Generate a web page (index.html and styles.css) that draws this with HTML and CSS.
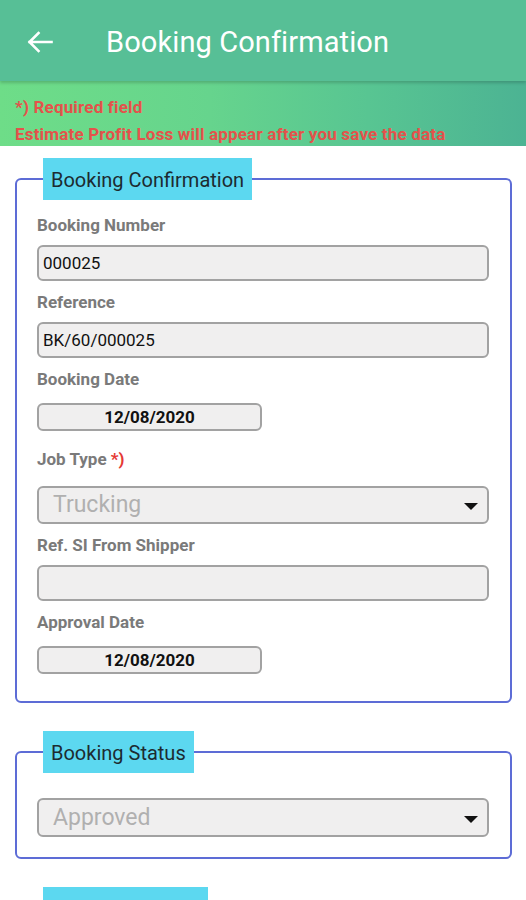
FILE: index.html
```html
<!DOCTYPE html>
<html lang="en">
<head>
<meta charset="utf-8">
<title>Booking Confirmation</title>
<link rel="stylesheet" href="styles.css">
</head>
<body>
<header class="appbar">
  <button class="back" aria-label="Back">
    <svg width="26" height="22" viewBox="0 0 26 22" aria-hidden="true">
      <path d="M24.5 11H2.5M11.5 2L2.5 11L11.5 20" fill="none" stroke="#ffffff" stroke-width="2.6" stroke-linecap="square" stroke-linejoin="miter"/>
    </svg>
  </button>
  <h1 class="title">Booking Confirmation</h1>
</header>
<div class="notice">
  <p>*) Required field</p>
  <p>Estimate Profit Loss will appear after you save the data</p>
</div>
<main class="content">
  <fieldset class="group">
    <legend class="group-title">Booking Confirmation</legend>
    <div class="field">
      <label class="label">Booking Number</label>
      <div class="input">000025</div>
    </div>
    <div class="field">
      <label class="label">Reference</label>
      <div class="input">BK/60/000025</div>
    </div>
    <div class="field field-date">
      <label class="label">Booking Date</label>
      <div class="date">12/08/2020</div>
    </div>
    <div class="field field-select">
      <label class="label">Job Type <span class="req">*)</span></label>
      <div class="select"><span class="placeholder">Trucking</span><span class="caret"></span></div>
    </div>
    <div class="field">
      <label class="label">Ref. SI From Shipper</label>
      <div class="input"></div>
    </div>
    <div class="field field-date">
      <label class="label">Approval Date</label>
      <div class="date">12/08/2020</div>
    </div>
  </fieldset>

  <fieldset class="group group-status">
    <legend class="group-title">Booking Status</legend>
    <div class="select"><span class="placeholder">Approved</span><span class="caret"></span></div>
  </fieldset>

  <fieldset class="group">
    <legend class="group-title group-title-next"></legend>
    <div class="field">
      <div class="input"></div>
    </div>
  </fieldset>
</main>
</body>
</html>
```
FILE: styles.css
```css
* { box-sizing: border-box; }
html, body { margin: 0; padding: 0; background: #ffffff; }
body {
  font-family: Roboto, "Noto Sans", "Liberation Sans", sans-serif;
  color: #1b1b1b;
  width: 526px;
}
.appbar {
  height: 81px;
  background: #57bf96;
  display: flex;
  align-items: center;
  padding: 3px 0 0 0;
  box-shadow: 0 2px 3px rgba(0, 0, 0, 0.18);
  position: relative;
  z-index: 1;
}
.back {
  background: none;
  border: 0;
  padding: 0;
  margin: 0 0 0 27px;
  width: 26px;
  height: 22px;
  display: flex;
}
.title {
  margin: 0 0 0 53px;
  font-size: 29px;
  font-weight: 400;
  color: #ffffff;
  line-height: 32px;
  letter-spacing: 0.1px;
}
.notice {
  height: 65px;
  padding: 13px 0 0 15px;
  background: linear-gradient(90deg, #6edd88 0%, #66d48d 40%, #58c592 70%, #4cb393 100%);
  color: #e4524b;
  font-weight: 700;
  font-size: 17px;
  line-height: 27px;
  letter-spacing: 0.18px;
  overflow: visible;
}
.notice p { margin: 0; white-space: nowrap; }
.content {
  padding: 12px 14px 0 15px;
  display: flex;
  flex-direction: column;
  gap: 28px;
}
.group {
  margin: 0;
  border: 2px solid #5d6cd6;
  border-radius: 6px;
  padding: 0 21px 20px 20px;
  min-width: 0;
}
.group-title {
  margin-left: 6px;
  padding: 2px 8px 0 8px;
  height: 42px;
  line-height: 40px;
  background: #5cd8f0;
  color: #1c2b31;
  font-size: 20px;
  font-weight: 400;
}
.group-title-next { width: 165px; }
.field { display: flex; flex-direction: column; margin-top: 11px; }
.field:first-of-type { margin-top: 15px; }
.label {
  font-size: 17px;
  font-weight: 700;
  color: #7a7a7a;
  line-height: 20px;
  margin-bottom: 10px;
}
.req { color: #e53935; }
.input {
  height: 36px;
  background: #f0efef;
  border: 2px solid #a2a2a2;
  border-radius: 6px;
  padding: 0 4px;
  font-size: 17px;
  line-height: 32px;
  color: #111111;
}
.field-date { padding-bottom: 7px; }
.field-date .label { margin-bottom: 14px; }
.date {
  width: 225px;
  height: 28px;
  background: #f0efef;
  border: 2px solid #a2a2a2;
  border-radius: 6px;
  text-align: center;
  font-size: 17px;
  font-weight: 700;
  line-height: 24px;
  color: #111111;
}
.field-select .label { margin-bottom: 17px; }
.select {
  height: 38px;
  background: #f0efef;
  border: 2px solid #a2a2a2;
  border-radius: 6px;
  display: flex;
  align-items: center;
  justify-content: space-between;
  padding: 0 9px 0 14px;
}
.placeholder {
  font-size: 23px;
  color: #b0b0b0;
  line-height: 30px;
}
.caret {
  width: 0;
  height: 0;
  border-left: 7px solid transparent;
  border-right: 7px solid transparent;
  border-top: 7px solid #111111;
  margin-top: 3px;
}
.group-status { padding-top: 25px; padding-bottom: 20px; }
.group-status .select { height: 39px; }
```
